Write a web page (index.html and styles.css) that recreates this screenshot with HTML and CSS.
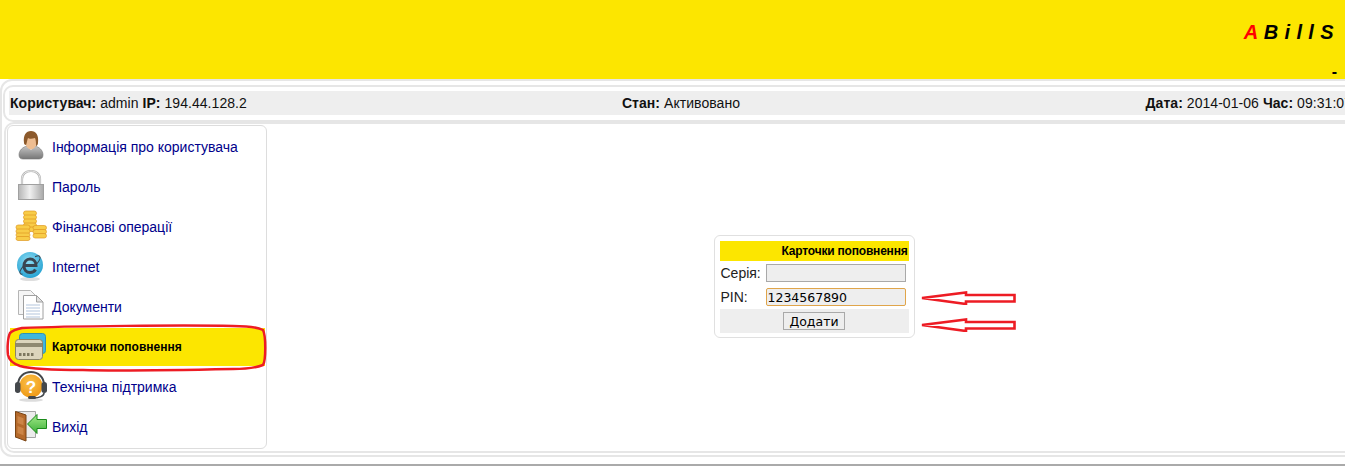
FILE: index.html
```html
<!DOCTYPE html>
<html lang="uk">
<head>
<meta charset="utf-8">
<title>ABillS</title>
<link rel="stylesheet" href="styles.css">
</head>
<body>
<header class="banner">
  <div class="logo"><span class="logo-a">A</span> B i l l S</div>
  <div class="dash">-</div>
</header>
<div class="shell">
  <div class="infobox">
    <div class="infobar">
      <div class="cell"><b>Користувач:</b> admin <b>IP:</b> 194.44.128.2</div>
      <div class="cell"><b>Стан:</b> Активовано</div>
      <div class="cell cell-end"><b>Дата:</b> 2014-01-06 <b>Час:</b> 09:31:07</div>
    </div>
  </div>
  <main class="content">
    <nav class="menu">
      <a class="item"><svg class="ico" viewBox="0 0 32 32"><defs><linearGradient id="sh" x1="0" y1="0" x2="0" y2="1"><stop offset="0" stop-color="#c4c4c4"/><stop offset="1" stop-color="#767676"/></linearGradient></defs><path d="M4 25c0-5 4-8 8-9h8c4 1 8 4 8 9 0 3-2 4-4 4H8c-2 0-4-1-4-4z" fill="url(#sh)" stroke="#777" stroke-width=".6"/><path d="M12 16l4 4 4-4-1-3h-6z" fill="#eee"/><ellipse cx="16" cy="11" rx="6" ry="8.500" fill="#eebd91"/><path d="M9 13C8 5 11 1 16 1s8 4 7 12c0 1-1 3-2 3 0-3 0-6-1-8-3 1-6 1-7 0-1 2-1 5-2 7-1 0-2-1-2-2z" fill="#8c5a2c"/></svg><span>Інформація про користувача</span></a>
      <a class="item"><svg class="ico" viewBox="0 0 32 32"><defs><linearGradient id="lk" x1="0" y1="0" x2="1" y2="0"><stop offset="0" stop-color="#b5b5b5"/><stop offset=".45" stop-color="#f0f0f0"/><stop offset="1" stop-color="#a8a8a8"/></linearGradient></defs><path d="M7 16V9c0-5 4-8 9-8s9 3 9 8v7" fill="none" stroke="#b4b4b4" stroke-width="2.200"/><path d="M7 16V9c0-5 4-8 9-8s9 3 9 8v7" fill="none" stroke="#f4f4f4" stroke-width=".8"/><rect x="3.500" y="14.500" width="25" height="15" fill="url(#lk)" stroke="#a0a0a0"/></svg><span>Пароль</span></a>
      <a class="item"><svg class="ico" viewBox="0 0 32 32"><g fill="#f8cc48" stroke="#e09a22" stroke-width=".7"><rect x="8.500" y="1" width="13" height="4.500" rx="2.200"/><rect x="8.500" y="5" width="13" height="4.500" rx="2.200"/><rect x="8.500" y="9" width="13" height="4.500" rx="2.200"/><rect x="8.500" y="13" width="13" height="4.500" rx="2.200"/><rect x="8.500" y="17" width="13" height="4.500" rx="2.200"/><rect x="18" y="15.500" width="13.500" height="4.500" rx="2.200"/><rect x="18" y="19.500" width="13.500" height="4.500" rx="2.200"/><rect x="18" y="23.500" width="13.500" height="4.500" rx="2.200"/><rect x="1" y="15" width="14" height="4.500" rx="2.200"/><rect x="1" y="19" width="14" height="4.500" rx="2.200"/><rect x="1" y="23" width="14" height="4" rx="2"/><rect x="1" y="26.500" width="14" height="4" rx="2"/></g></svg><span>Фінансові операції</span></a>
      <a class="item"><svg class="ico" viewBox="0 0 32 32"><defs><radialGradient id="ie" cx=".45" cy=".35" r=".7"><stop offset="0" stop-color="#8edcf3"/><stop offset="1" stop-color="#1f9fd0"/></radialGradient></defs><ellipse cx="15" cy="29" rx="10" ry="2" fill="#dedede"/><circle cx="15" cy="15" r="13" fill="url(#ie)"/><path d="M9.500 15.500H21c0-4-2.500-6.500-6-6.500s-6 3-6 7 2.500 6.500 6 6.500c2.500 0 4.500-1 5.500-3" fill="none" stroke="#3a4550" stroke-width="3"/><ellipse cx="15" cy="15" rx="13" ry="4" transform="rotate(-42 15 15)" fill="none" stroke="#3a4550" stroke-width="1" stroke-dasharray="12 14"/></svg><span>Internet</span></a>
      <a class="item"><svg class="ico" viewBox="0 0 32 32"><path d="M3.500.5h12l5 5v19h-17z" fill="#f5f5f5" stroke="#b5b5b5"/><path d="M8.500 5.500h13l6.500 6.500v17H8.500z" fill="#fff" stroke="#a0a0a0"/><path d="M21.500 5.500V12H28z" fill="#e2e2e2" stroke="#a0a0a0"/><path d="M11 15h14M11 18h14M11 21h14M11 24h14M11 27h14" stroke="#b3c5dc"/></svg><span>Документи</span></a>
      <a class="item active"><svg class="ico" viewBox="0 0 32 32"><rect x="4.500" y="3.500" width="26" height="20" rx="3" fill="#3fb6dd" stroke="#2d92b4"/><rect x=".5" y="9.500" width="27" height="20" rx="3" fill="#dcd5bc" stroke="#8a8368"/><rect x="1" y="13" width="26" height="4" fill="#8f8970"/><path d="M4 23h2.500v3H4zM8 23h2.500v3H8zM12 23h2.500v3H12zM16 23h2.500v3H16z" fill="#7d775e"/></svg><span>Карточки поповнення</span><svg class="ring" viewBox="0 0 262 48"><path d="M4 9C7 6 11 5 16 4 60 2 180 1 227 2c12 0 24 1 30 4 3 6 3 30 0 35-8 3-18 4-30 4-50 1-120 2-150 1-30 0-52-1-63-4-6-2-11-6-12-11-1-8 0-18 2-22z" fill="none" stroke="#ed1c24" stroke-width="2.500"/></svg></a>
      <a class="item"><svg class="ico" viewBox="0 0 32 32"><defs><radialGradient id="hp" cx=".45" cy=".35" r=".7"><stop offset="0" stop-color="#fbc24a"/><stop offset="1" stop-color="#ee9612"/></radialGradient></defs><ellipse cx="16" cy="30" rx="12" ry="1.800" fill="#ddd"/><circle cx="16" cy="16" r="11.500" fill="url(#hp)"/><path d="M3 15C3 7 9 2 16 2s13 5 13 13" fill="none" stroke="#44484c" stroke-width="2"/><rect x="0" y="12" width="5.500" height="11" rx="2.700" fill="#44484c"/><rect x="26.500" y="12" width="5.500" height="11" rx="2.700" fill="#44484c"/><path d="M29 23c0 3-5 5-10 5" fill="none" stroke="#44484c" stroke-width="1.600"/><rect x="13" y="26" width="8" height="3" rx="1.500" fill="#44484c"/><text class="q" x="16" y="23" text-anchor="middle">?</text></svg><span>Технічна підтримка</span></a>
      <a class="item"><svg class="ico" viewBox="0 0 32 32"><defs><linearGradient id="ar" x1="0" y1="0" x2="0" y2="1"><stop offset="0" stop-color="#a4ea8a"/><stop offset="1" stop-color="#3cb038"/></linearGradient></defs><path d="M.5 1.500h20v26H.5z" fill="#ececec" stroke="#a5a5a5"/><path d="M.5 1.500L11 5v26L.5 27z" fill="#b56a2b" stroke="#7a4414"/><path d="M2.500 6l6 2.200v7l-6-2.200zM2.500 16l6 2.200v7l-6-2.200z" fill="#cc8547"/><path d="M31.500 9.500H22v-5L12.500 14 22 23.500v-5h9.500z" fill="url(#ar)" stroke="#1a8a1a"/></svg><span>Вихід</span></a>
    </nav>
    <section class="stage">
      <form class="card">
        <div class="card-title">Карточки поповнення</div>
        <div class="row"><label class="lbl">Серія:</label><input class="field" value=""></div>
        <div class="row"><label class="lbl">PIN:</label><input class="field focus" value="1234567890"></div>
        <div class="actions"><button class="btn" type="button">Додати</button></div>
        <svg class="arrow arrow-1" viewBox="0 0 96 14"><path d="M2 7 46 1.500V4h48.500v6.500H46V13z" fill="none" stroke="#ed1c24" stroke-width="2.600"/></svg>
        <svg class="arrow arrow-2" viewBox="0 0 96 14"><path d="M2 7 46 1.500V4h48.500v6.500H46V13z" fill="none" stroke="#ed1c24" stroke-width="2.600"/></svg>
      </form>
    </section>
  </main>
</div>
<div class="footline"></div>
</body>
</html>
```

FILE: styles.css
```css
html, body { margin: 0; padding: 0; }
body { background: #fff; font-family: "Liberation Sans", Arial, sans-serif; font-size: 14px; color: #000; overflow: hidden; height: 468px; width: 1345px; }
.banner { height: 79px; background: #fce600; position: relative; }
.logo { position: absolute; right: 11px; top: 21px; font: italic bold 20px "Liberation Sans", Arial, sans-serif; letter-spacing: .4px; white-space: nowrap; }
.logo-a { color: #f00; }
.dash { position: absolute; right: 8px; top: 63px; font-weight: bold; font-size: 16px; }
.shell { width: 1370px; box-sizing: border-box; border: 2px solid #e6e6e6; border-radius: 12px; padding: 4px 1px 2px 1px; }
.infobox { border: 2px solid #e6e6e6; border-radius: 10px; padding: 4px 13px 5px 4px; }
.infobar { display: grid; grid-template-columns: 1fr auto 1fr; background: #eee; height: 24px; align-items: center; white-space: nowrap; padding-left: 1px; letter-spacing: .05px; color: #111; }
.cell-end { text-align: right; }
.content { display: flex; margin-left: 1px; border: 2px solid #e6e6e6; border-radius: 10px; padding: 1px 4px 2px 1px; }
.menu { width: 260px; box-sizing: border-box; border: 1px solid #ddd; border-radius: 6px; padding: 1px 0; flex: none; }
.item { display: flex; align-items: center; gap: 5px; height: 40px; padding-left: 7px; color: #00008b; font-size: 14px; position: relative; }
.ico { width: 32px; height: 32px; flex: none; margin-bottom: 2px; }
.q { font: bold 17px "Liberation Sans", sans-serif; fill: #fff; }
.active { background: #fce600; color: #000; font-size: 12px; font-weight: bold; height: 38px; margin: 1px 1px 1px 2px; padding-left: 5px; }
.ring { position: absolute; left: -4px; top: -4px; width: 262px; height: 48px; }
.stage { flex: 1; display: flex; justify-content: center; }
.card { position: relative; align-self: flex-start; margin-top: 110px; width: 201px; height: 103px; box-sizing: border-box; border: 1px solid #e0e0e0; border-radius: 6px; padding: 5px 5px 0; }
.card-title { background: #fce600; height: 20px; line-height: 20px; text-align: right; font-size: 12px; font-weight: bold; letter-spacing: -.2px; padding-right: 1px; }
.row { display: flex; align-items: center; height: 24px; }
.lbl { width: 46px; padding-left: 1px; box-sizing: border-box; color: #222; }
.field { width: 140px; height: 18px; box-sizing: border-box; border: 1px solid #a9a9a9; background: #eee; padding: 0 1px; font: 12.5px "DejaVu Sans", sans-serif; margin: 0; }
.focus { border-color: #e0a54a; border-radius: 2px; outline: none; }
.actions { background: #eee; height: 24px; display: flex; align-items: center; justify-content: center; }
.btn { width: 62px; height: 18px; padding: 0; border: 1px solid #a9a9a9; background: #eee; font: 12.5px "DejaVu Sans", sans-serif; color: #000; }
.arrow { position: absolute; left: 205px; width: 96px; height: 14px; }
.arrow-1 { top: 55px; }
.arrow-2 { top: 82px; }
.footline { margin-top: 7px; height: 2px; background: #aaa; }
```
